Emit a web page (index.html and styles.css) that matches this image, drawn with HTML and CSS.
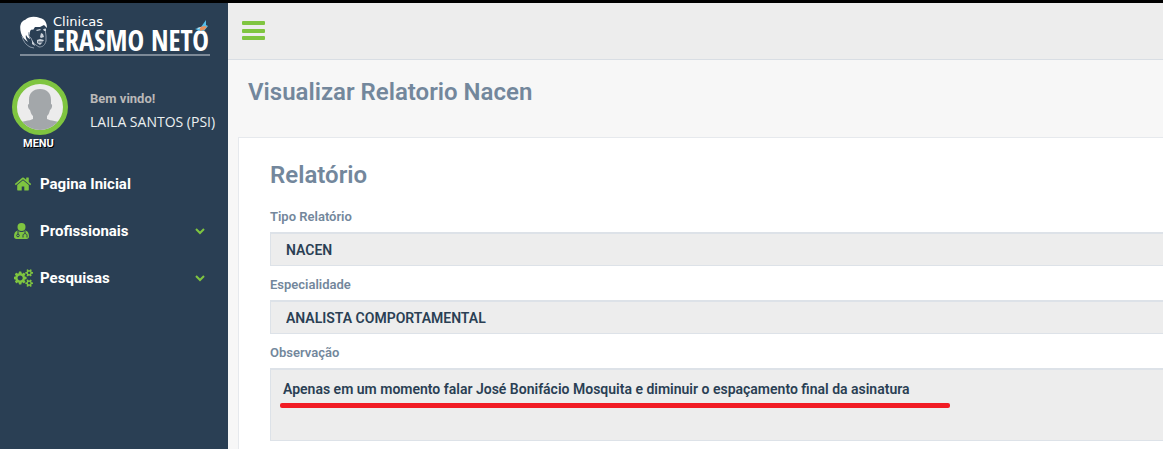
FILE: index.html
```html
<!DOCTYPE html>
<html lang="pt-BR">
<head>
<meta charset="utf-8">
<title>Visualizar Relatorio Nacen</title>
<link rel="stylesheet" href="styles.css">
</head>
<body>
<div class="app">
  <aside class="sidebar">
    <a class="logo" href="#">
      <svg class="logo-face" viewBox="0 0 28 34" aria-hidden="true">
        <path fill="#fff" d="M1 17C-1 10 1 5 5 4 9 0 15 0 20 2c5 1 7 5 7 10l-3-3-4 2-5 0-2 3c-1-1-3 0-3 2l-1 4 1 3c-3-1-3-3-4-4-1 3 1 5 2 7C5 24 2 21 1 17z"/>
        <path fill="none" stroke="#8e9baa" d="M2 20c1 5 4 9 8 11l4 1M9 16c-1 3 0 5 2 6l2 5 6 4c4 0 6-2 7-6l0-5-1-8"/>
        <path fill="#c9d0d8" d="M16 14l4-1 1 1-4 1zM23 13l3 0v2l-2 0zM21 17l2 1 1 3-3 1-1-1zM17 24l3-1 4 1-2 3-2 2-3-2zM12 24l2 3 1 3-3-2z"/>
        <path stroke="#2a3f54" d="M18 26h5"/>
      </svg>
      <span class="logo-words">
        <span class="logo-top">Clinicas</span>
        <span class="logo-name">ERASMO NETO</span>
      </span>
      <svg class="logo-bird" viewBox="0 0 16 14" aria-hidden="true">
        <path fill="#55bce8" d="M1 9l6-2 5-7v5l2 1-4 5-4 0z"/>
        <path fill="#e9905b" d="M6 7l5-1 2 1-3 3-4 1z"/>
        <path fill="#d9eef7" d="M3 8l4-1-2 2z"/>
      </svg>
    </a>
    <div class="profile">
      <div class="profile-menu">
        <svg class="avatar" viewBox="0 0 56 56" role="img" aria-label="Foto">
          <defs><clipPath id="disc"><circle cx="28" cy="28" r="23"/></clipPath></defs>
          <circle cx="28" cy="28" r="25.500" fill="#ececec" stroke="#7fc540" stroke-width="5"/>
          <path clip-path="url(#disc)" fill="#a3a7aa" d="M28 10c7 0 11 4 11 11v4c2 0 1 5-1 6-1 4-2 5-3 6v3c3 2 13 2 17 5v11H4V45c4-3 14-3 17-5v-3c-1-1-2-2-3-6-2-1-3-6-1-6v-4c0-7 4-11 11-11z"/>
        </svg>
        <span class="menu-label">MENU</span>
      </div>
      <div class="profile-info">
        <span class="welcome">Bem vindo!</span>
        <span class="user">LAILA SANTOS (PSI)</span>
      </div>
    </div>
    <nav class="nav">
      <a class="nav-item" href="#">
        <svg class="nav-icon" viewBox="0 0 1792 1792" aria-hidden="true"><path d="M1472 992v480q0 26-19 45t-45 19h-384v-384h-256v384h-384q-26 0-45-19t-19-45v-480q0-1 .5-3t.5-3l575-474 575 474q1 2 1 6zm223-69l-62 74q-8 9-21 11h-3q-13 0-21-7l-692-577-692 577q-12 8-24 7-13-2-21-11l-62-74q-8-10-7-23.500t11-21.500l719-599q32-26 76-26t76 26l244 204v-195q0-14 9-23t23-9h192q14 0 23 9t9 23v408l219 182q10 8 11 21.500t-7 23.500z"/></svg>
        <span>Pagina Inicial</span>
      </a>
      <a class="nav-item" href="#">
        <svg class="nav-icon" viewBox="0 0 18 18" aria-hidden="true">
          <circle cx="7.500" cy="5" r="4"/>
          <path d="M4 8.500c2 2 5 2 7 0 3 .5 4 3 4 6 0 1.500-1 2.500-2.500 2.500h-10C1 17 0 16 0 14.500c0-3 1-5.500 4-6z"/>
          <path class="cut" d="M4 9v3M11 9v2.500M9 15.500v-2c0-2.500 4-2.500 4 0v2"/>
          <circle class="cut" cx="4" cy="13.500" r="1.300"/>
        </svg>
        <span>Profissionais</span>
        <svg class="chevron" viewBox="0 0 10 10" aria-hidden="true"><path d="M1 3l4 4 4-4"/></svg>
      </a>
      <a class="nav-item" href="#">
        <svg class="nav-icon nav-icon-wide" viewBox="0 0 1920 1792" aria-hidden="true"><path d="M832 896q0-106-75-181t-181-75-181 75-75 181 75 181 181 75 181-75 75-181zm768 512q0-52-38-90t-90-38-90 38-38 90q0 53 37.500 90.500t90.500 37.500 90.500-37.500 37.500-90.500zm0-1024q0-52-38-90t-90-38-90 38-38 90q0 53 37.500 90.500t90.500 37.500 90.500-37.500 37.500-90.500zm-384 421v185q0 10-7 19.500t-16 10.500l-155 24q-11 35-32 76 34 48 90 115 7 11 7 20 0 12-7 19-23 30-82.500 89.500t-78.500 59.500q-11 0-21-7l-115-90q-37 19-77 31-11 108-23 155-7 24-30 24h-186q-11 0-20-7.500t-10-17.500l-23-153q-34-10-75-31l-118 89q-7 7-20 7-11 0-21-8-144-133-144-160 0-9 7-19 10-14 41-53t47-61q-23-44-35-82l-152-24q-10-1-17-9.500t-7-19.500v-185q0-10 7-19.500t16-10.500l155-24q11-35 32-76-34-48-90-115-7-11-7-20 0-12 7-20 22-30 82-89t79-59q11 0 21 7l115 90q34-18 77-32 11-108 23-154 7-24 30-24h186q11 0 20 7.500t10 17.500l23 153q34 10 75 31l118-89q8-7 20-7 11 0 21 8 144 133 144 160 0 8-7 19-12 16-42 54t-45 60q23 48 34 82l152 23q10 2 17 10.500t7 19.500zm640 533v140q0 16-149 31-12 27-30 52 51 113 51 138 0 4-4 7-122 71-124 71-8 0-46-47t-52-68q-20 2-30 2t-30-2q-14 21-52 68t-46 47q-2 0-124-71-4-3-4-7 0-25 51-138-18-25-30-52-149-15-149-31v-140q0-16 149-31 13-29 30-52-51-113-51-138 0-4 4-7 4-2 35-20t59-34 30-16q8 0 46 46.500t52 67.500q20-2 30-2t30 2q51-71 92-112l6-2q4 0 124 70 4 3 4 7 0 25-51 138 17 23 30 52 149 15 149 31zm0-1024v140q0 16-149 31-12 27-30 52 51 113 51 138 0 4-4 7-122 71-124 71-8 0-46-47t-52-68q-20 2-30 2t-30-2q-14 21-52 68t-46 47q-2 0-124-71-4-3-4-7 0-25 51-138-18-25-30-52-149-15-149-31v-140q0-16 149-31 13-29 30-52-51-113-51-138 0-4 4-7 4-2 35-20t59-34 30-16q8 0 46 46.500t52 67.500q20-2 30-2t30 2q51-71 92-112l6-2q4 0 124 70 4 3 4 7 0 25-51 138 17 23 30 52 149 15 149 31z"/></svg>
        <span>Pesquisas</span>
        <svg class="chevron" viewBox="0 0 10 10" aria-hidden="true"><path d="M1 3l4 4 4-4"/></svg>
      </a>
    </nav>
  </aside>
  <div class="content">
    <header class="topbar">
      <button class="toggle" type="button" aria-label="Alternar menu">
        <svg viewBox="0 0 24 20" aria-hidden="true"><path d="M1 0h21q1 0 1 1v2q0 1-1 1H1q-1 0-1-1V1q0-1 1-1zM1 8h21q1 0 1 1v2q0 1-1 1H1q-1 0-1-1V9q0-1 1-1zM1 15h21q1 0 1 1v2q0 1-1 1H1q-1 0-1-1v-2q0-1 1-1z"/></svg>
      </button>
    </header>
    <main class="page">
      <h1 class="title">Visualizar Relatorio Nacen</h1>
      <form class="panel">
        <h2 class="title">Relatório</h2>
        <div class="field">
          <label for="tipo">Tipo Relatório</label>
          <input id="tipo" type="text" value="NACEN" readonly>
        </div>
        <div class="field">
          <label for="especialidade">Especialidade</label>
          <input id="especialidade" type="text" value="ANALISTA COMPORTAMENTAL" readonly>
        </div>
        <div class="field">
          <label for="obs">Observação</label>
          <textarea id="obs" rows="3" spellcheck="false" readonly>Apenas em um momento falar José Bonifácio Mosquita e diminuir o espaçamento final da asinatura</textarea>
          <span class="underline"></span>
        </div>
      </form>
    </main>
  </div>
</div>
</body>
</html>
```
FILE: styles.css
```css
* { box-sizing: border-box; }

body {
  margin: 0;
  font-family: Roboto, "Liberation Sans", sans-serif;
  font-size: 14px;
  color: #73879c;
  background: #f7f7f7;
}

.app {
  display: flex;
  min-height: 100vh;
  border-top: 3px solid #000;
}

.sidebar {
  flex: 0 0 228px;
  background: #2a3f54;
}

.logo {
  position: relative;
  display: flex;
  gap: 5px;
  width: 190px;
  margin: 12px 0 0 20px;
  border-bottom: 2px solid #7d8a98;
  color: #fff;
  text-decoration: none;
}

.logo-face { flex: none; width: 28px; height: 34px; margin: 1px 0 4px; }

.logo-words {
  display: flex;
  flex-direction: column;
  white-space: nowrap;
}

.logo-top { font: 13px/13px "DejaVu Sans", sans-serif; }

.logo-name {
  font-family: "Liberation Sans Narrow", "Open Sans Condensed", Roboto, sans-serif;
  font-size: 28px;
  font-weight: 700;
  line-height: 24px;
}

.logo-bird {
  position: absolute;
  right: 0;
  top: 5px;
  width: 16px;
  height: 14px;
}

.profile {
  display: flex;
  gap: 22px;
  margin-top: 23px;
  padding-left: 12px;
}

.profile-menu {
  display: flex;
  flex-direction: column;
}

.avatar { width: 56px; height: 56px; }

.menu-label {
  padding: 1px 0 0 11px;
  font-size: 11px;
  font-weight: 700;
  line-height: 16px;
  color: #fff;
  text-shadow: 1px 1px 0 #000;
}

.profile-info {
  display: flex;
  flex-direction: column;
  padding-top: 8px;
  white-space: nowrap;
}

.welcome { font-size: 13px; font-weight: 700; line-height: 24px; color: #bab8b8; }
.user { font: 14px/22px "Open Sans", sans-serif; color: #ecf0f1; }

.nav { margin-top: 8px; }

.nav-item {
  display: flex;
  align-items: center;
  height: 47px;
  padding: 0 23px 0 14px;
  color: #fff;
  font-size: 15px;
  font-weight: 700;
  text-decoration: none;
}

.nav-icon {
  width: 18px;
  height: 18px;
  margin-right: 8px;
  fill: #7fc540;
}

.nav-icon-wide { width: 20px; margin-right: 6px; }
.cut { fill: none; stroke: #2a3f54; }

.chevron {
  width: 10px;
  height: 10px;
  margin-left: auto;
  fill: none;
  stroke: #7fc540;
  stroke-width: 2;
}

.content { flex: 1; min-width: 0; }

.topbar {
  height: 57px;
  padding: 18px 14px;
  background: #ededed;
  border-bottom: 1px solid #d9dee4;
}

.toggle {
  display: block;
  padding: 0;
  border: 0;
  background: none;
}

.toggle svg { display: block; width: 24px; height: 20px; fill: #7fc540; }

.page { padding: 16px 0 0 10px; }

.title {
  margin: 0;
  font-size: 24px;
  font-weight: 600;
  line-height: 32px;
}

.page > .title { margin: 0 0 29px 10px; }

.panel {
  padding: 21px 0 8px 31px;
  background: #fff;
  border: 1px solid #e6e9ed;
  border-right: 0;
}

.panel > .title { margin-bottom: 16px; }

.field {
  position: relative;
  display: flex;
  flex-direction: column;
  gap: 5px;
  padding-bottom: 9px;
}

.field label { font-size: 13px; font-weight: 600; line-height: 20px; }

.field input,
.field textarea {
  width: 100%;
  border: 1px solid #dde2e8;
  border-top-width: 2px;
  border-right: 0;
  border-radius: 0;
  background: #ededed;
  color: #2a3f54;
  font: 600 14px/20px Roboto, sans-serif;
  resize: none;
  outline: 0;
}

.field input { height: 34px; padding: 0 15px; }
.field textarea { height: 73px; padding: 9px 12px; }

.underline {
  position: absolute;
  left: 10px;
  top: 60px;
  width: 670px;
  height: 5px;
  border-radius: 2px;
  background: #f11c24;
}
```
